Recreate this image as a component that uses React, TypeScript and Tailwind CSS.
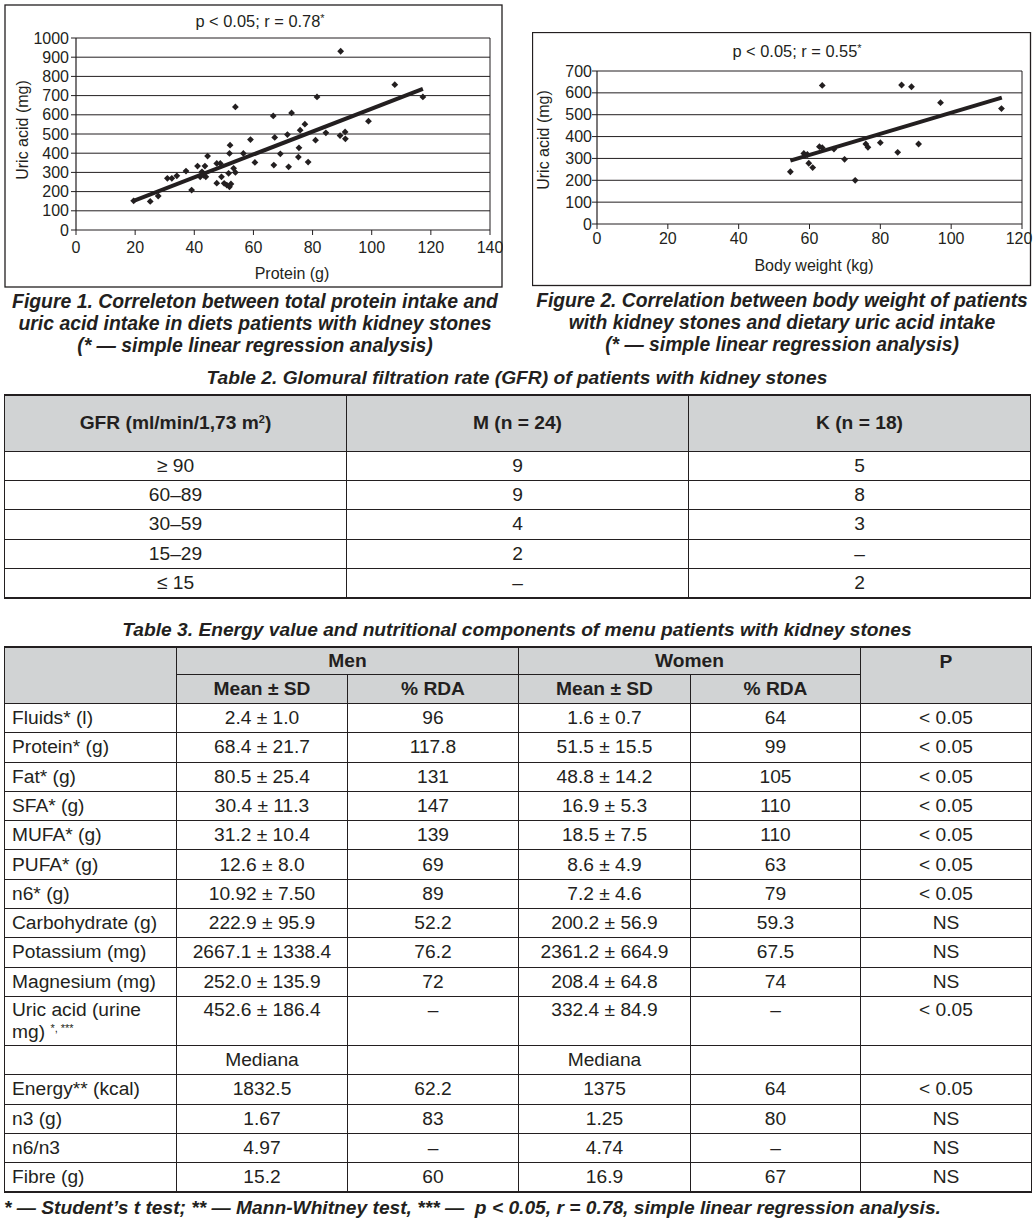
import React from "react";

type Pt = [number, number];

// Figure 1 data: protein (g) vs uric acid (mg)
const proteinPts: Pt[] = [
  [19.5, 152], [25.1, 149], [27.8, 177], [30.9, 269], [32.4, 269], [34.1, 282], [37.2, 307],
  [39.1, 208], [41.1, 333], [42, 277], [42.6, 303], [42.9, 295], [43.6, 333], [43.9, 277],
  [44.5, 385], [43.2, 285], [47.6, 347], [47.6, 244], [48.8, 347], [49.2, 277], [50.1, 243],
  [51, 234], [51.6, 295], [51.9, 225], [52.1, 442], [51.9, 399], [52.4, 240], [53.3, 321],
  [53.9, 641], [53.9, 300], [56.6, 399], [59, 471], [60.5, 352], [66.7, 594], [66.9, 338],
  [67.2, 482], [69.1, 397], [71.5, 497], [71.9, 329], [72.9, 610], [75.4, 428], [75.2, 380],
  [75.8, 520], [77.4, 551], [78.5, 354], [81, 468], [81.5, 693], [84.5, 506], [89.3, 492],
  [89.5, 931], [91, 511], [91.1, 475], [98.9, 567], [107.8, 757], [117.3, 693],
];

// Figure 2 data: body weight (kg) vs uric acid (mg)
const weightPts: Pt[] = [
  [54.6, 239], [58.4, 323], [59.4, 318], [59.8, 278], [60.9, 258], [62.8, 354], [63.6, 634],
  [63.6, 349], [66.9, 343], [69.9, 296], [72.9, 200], [75.9, 366], [76.5, 351], [80, 372],
  [84.9, 328], [86, 636], [88.8, 628], [90.8, 366], [97, 555], [114.2, 528],
];

const ink = "#231f20";

function Diamond({ x, y }: { x: number; y: number }) {
  return <polygon points={`${x},${y - 3.4} ${x + 3.4},${y} ${x},${y + 3.4} ${x - 3.4},${y}`} fill={ink} />;
}

function Figure1() {
  const sx = (v: number) => 76 + (v / 140) * 414;
  const sy = (v: number) => 230 - (v / 1000) * 192;
  const ys = [0, 100, 200, 300, 400, 500, 600, 700, 800, 900, 1000];
  const xs = [0, 20, 40, 60, 80, 100, 120, 140];
  return (
    <svg width={499} height={284} viewBox="4 4 499 284" className="block" fill={ink}>
      <rect x={5} y={5} width={497} height={282} fill="none" stroke={ink} strokeWidth={1.3} />
      <text x={260} y={27} textAnchor="middle" fontSize={16.4}>
        p &lt; 0.05; r = 0.78<tspan fontSize={11} dy={-5}>*</tspan>
      </text>
      {ys.map((v) => (
        <g key={v}>
          <line x1={71} x2={490} y1={sy(v)} y2={sy(v)} stroke={ink} strokeWidth={1} />
          <text x={69} y={sy(v) + 5.5} textAnchor="end" fontSize={16}>{v}</text>
        </g>
      ))}
      <line x1={76} x2={76} y1={38} y2={230} stroke={ink} strokeWidth={1.2} />
      <line x1={490} x2={490} y1={38} y2={230} stroke={ink} strokeWidth={1} />
      {xs.map((v) => (
        <g key={v}>
          <line x1={sx(v)} x2={sx(v)} y1={230} y2={235} stroke={ink} strokeWidth={1} />
          <text x={sx(v)} y={253} textAnchor="middle" fontSize={16}>{v}</text>
        </g>
      ))}
      <text x={292} y={279} textAnchor="middle" fontSize={16}>Protein (g)</text>
      <text x={28} y={130} textAnchor="middle" fontSize={16} transform="rotate(-90 28 130)">Uric acid (mg)</text>
      {proteinPts.map(([x, y], i) => (
        <Diamond key={i} x={sx(x)} y={sy(y)} />
      ))}
      <line x1={sx(19.5)} y1={sy(152)} x2={sx(117.3)} y2={sy(735)} stroke={ink} strokeWidth={4} />
    </svg>
  );
}

function Figure2() {
  const sx = (v: number) => 597 + (v / 120) * 425;
  const sy = (v: number) => 224 - (v / 700) * 153;
  const ys = [0, 100, 200, 300, 400, 500, 600, 700];
  const xs = [0, 20, 40, 60, 80, 100, 120];
  return (
    <svg width={502} height={255} viewBox="532 32 502 255" className="block" fill={ink}>
      <rect x={532.5} y={32.5} width={498} height={253} fill="none" stroke={ink} strokeWidth={1.3} />
      <text x={797} y={57} textAnchor="middle" fontSize={16.4}>
        p &lt; 0.05; r = 0.55<tspan fontSize={11} dy={-5}>*</tspan>
      </text>
      {ys.map((v) => (
        <g key={v}>
          <line x1={592} x2={1022} y1={sy(v)} y2={sy(v)} stroke={ink} strokeWidth={1} />
          <text x={592} y={sy(v) + 5.5} textAnchor="end" fontSize={16}>{v}</text>
        </g>
      ))}
      <line x1={597} x2={597} y1={71} y2={224} stroke={ink} strokeWidth={1.2} />
      <line x1={1022} x2={1022} y1={71} y2={224} stroke={ink} strokeWidth={1} />
      {xs.map((v) => (
        <g key={v}>
          <line x1={sx(v)} x2={sx(v)} y1={224} y2={229} stroke={ink} strokeWidth={1} />
          <text x={v === 120 ? 1019 : sx(v)} y={244} textAnchor="middle" fontSize={16}>{v}</text>
        </g>
      ))}
      <text x={814} y={271} textAnchor="middle" fontSize={16}>Body weight (kg)</text>
      <text x={549} y={140} textAnchor="middle" fontSize={16} transform="rotate(-90 549 140)">Uric acid (mg)</text>
      {weightPts.map(([x, y], i) => (
        <Diamond key={i} x={sx(x)} y={sy(y)} />
      ))}
      <line x1={sx(54.6)} y1={sy(290)} x2={sx(114.3)} y2={sy(578)} stroke={ink} strokeWidth={4} />
    </svg>
  );
}

const gfrRows = [
  ["≥ 90", "9", "5"],
  ["60–89", "9", "8"],
  ["30–59", "4", "3"],
  ["15–29", "2", "–"],
  ["≤ 15", "–", "2"],
];

type Row = { label: React.ReactNode; cells: string[]; tall?: boolean };

const nutrientRows: Row[] = [
  { label: "Fluids* (l)", cells: ["2.4 ± 1.0", "96", "1.6 ± 0.7", "64", "< 0.05"] },
  { label: "Protein* (g)", cells: ["68.4 ± 21.7", "117.8", "51.5 ± 15.5", "99", "< 0.05"] },
  { label: "Fat* (g)", cells: ["80.5 ± 25.4", "131", "48.8 ± 14.2", "105", "< 0.05"] },
  { label: "SFA* (g)", cells: ["30.4 ± 11.3", "147", "16.9 ± 5.3", "110", "< 0.05"] },
  { label: "MUFA* (g)", cells: ["31.2 ± 10.4", "139", "18.5 ± 7.5", "110", "< 0.05"] },
  { label: "PUFA* (g)", cells: ["12.6 ± 8.0", "69", "8.6 ± 4.9", "63", "< 0.05"] },
  { label: "n6* (g)", cells: ["10.92 ± 7.50", "89", "7.2 ± 4.6", "79", "< 0.05"] },
  { label: "Carbohydrate (g)", cells: ["222.9 ± 95.9", "52.2", "200.2 ± 56.9", "59.3", "NS"] },
  { label: "Potassium (mg)", cells: ["2667.1 ± 1338.4", "76.2", "2361.2 ± 664.9", "67.5", "NS"] },
  { label: "Magnesium (mg)", cells: ["252.0 ± 135.9", "72", "208.4 ± 64.8", "74", "NS"] },
  {
    label: (
      <>
        Uric acid (urine
        <br />
        mg) <sup className="text-[11px]">*, ***</sup>
      </>
    ),
    cells: ["452.6 ± 186.4", "–", "332.4 ± 84.9", "–", "< 0.05"],
    tall: true,
  },
  { label: "", cells: ["Mediana", "", "Mediana", "", ""] },
  { label: "Energy** (kcal)", cells: ["1832.5", "62.2", "1375", "64", "< 0.05"] },
  { label: "n3 (g)", cells: ["1.67", "83", "1.25", "80", "NS"] },
  { label: "n6/n3", cells: ["4.97", "–", "4.74", "–", "NS"] },
  { label: "Fibre (g)", cells: ["15.2", "60", "16.9", "67", "NS"] },
];

export default function App() {
  return (
    <div className="w-[1034px] bg-white font-['Liberation_Sans',Arial,sans-serif] text-[#231f20]">
      {/* Figures */}
      <div className="flex">
        <div className="w-[510px]">
          <div className="ml-[4px] mt-[4px]">
            <Figure1 />
          </div>
          <p className="mt-[2px] text-center text-[19.4px] font-bold italic leading-[22px]">
            Figure 1. Correleton between total protein intake and
            <br />
            uric acid intake in diets patients with kidney stones
            <br />
            (* — simple linear regression analysis)
          </p>
        </div>
        <div className="w-[524px]">
          <div className="ml-[22px] mt-[32px]">
            <Figure2 />
          </div>
          <p className="ml-[20px] mt-[3px] text-center text-[19.3px] font-bold italic leading-[22px]">
            Figure 2. Correlation between body weight of patients
            <br />
            with kidney stones and dietary uric acid intake
            <br />
            (* — simple linear regression analysis)
          </p>
        </div>
      </div>

      {/* Table 2 */}
      <p className="mt-[11px] text-center text-[19.2px] font-bold italic leading-[22px]">
        Table 2. Glomural filtration rate (GFR) of patients with kidney stones
      </p>
      <table className="ml-[4px] mt-[5px] w-[1027px] table-fixed border-collapse border-y-2 border-[#231f20] text-center text-[19.2px]">
        <thead>
          <tr className="h-[56px] bg-[#d1d3d4]">
            <th className="border border-[#231f20] font-bold">
              GFR (ml/min/1,73 m<sup className="text-[11px]">2</sup>)
            </th>
            <th className="border border-[#231f20] font-bold">M (n = 24)</th>
            <th className="border border-[#231f20] font-bold">K (n = 18)</th>
          </tr>
        </thead>
        <tbody>
          {gfrRows.map((r) => (
            <tr key={r[0]} className="h-[29.4px]">
              {r.map((c, i) => (
                <td key={i} className="border border-[#231f20] p-0 leading-tight">
                  {c}
                </td>
              ))}
            </tr>
          ))}
        </tbody>
      </table>

      {/* Table 3 */}
      <p className="mt-[20px] text-center text-[19.2px] font-bold italic leading-[22px]">
        Table 3. Energy value and nutritional components of menu patients with kidney stones
      </p>
      <table className="ml-[4px] mt-[5px] w-[1027px] table-fixed border-collapse border-y-2 border-[#231f20] text-center text-[19.2px]">
        <colgroup>
          <col className="w-[172px]" />
          <col className="w-[171px]" />
          <col className="w-[171px]" />
          <col className="w-[172px]" />
          <col className="w-[170px]" />
          <col className="w-[171px]" />
        </colgroup>
        <thead className="bg-[#d1d3d4]">
          <tr className="h-[27.5px]">
            <th rowSpan={2} className="border border-[#231f20]" />
            <th colSpan={2} className="border border-[#231f20] p-0 font-bold leading-tight">Men</th>
            <th colSpan={2} className="border border-[#231f20] p-0 font-bold leading-tight">Women</th>
            <th rowSpan={2} className="border border-[#231f20] pt-[2px] align-top font-bold leading-tight">P</th>
          </tr>
          <tr className="h-[29px]">
            <th className="border border-[#231f20] p-0 font-bold leading-tight">Mean ± SD</th>
            <th className="border border-[#231f20] p-0 font-bold leading-tight">% RDA</th>
            <th className="border border-[#231f20] p-0 font-bold leading-tight">Mean ± SD</th>
            <th className="border border-[#231f20] p-0 font-bold leading-tight">% RDA</th>
          </tr>
        </thead>
        <tbody>
          {nutrientRows.map((r, idx) => (
            <tr key={idx} className={r.tall ? "h-[48.5px]" : "h-[29.3px]"}>
              <td
                className={`border border-[#231f20] px-[7px] text-left ${
                  r.tall ? "py-[2px] align-top leading-[22px]" : "py-0 leading-tight"
                }`}
              >
                {r.label}
              </td>
              {r.cells.map((c, i) => (
                <td
                  key={i}
                  className={`border border-[#231f20] px-0 ${
                    r.tall ? "py-[2px] align-top leading-[22px]" : "py-0 leading-tight"
                  }`}
                >
                  {c}
                </td>
              ))}
            </tr>
          ))}
        </tbody>
      </table>
      <p className="ml-[4px] mt-[4px] pb-[8px] text-[19.2px] font-bold italic leading-[22px]">
        * — Student’s t test; ** — Mann-Whitney test, *** —&nbsp; p &lt; 0.05, r = 0.78, simple linear regression analysis.
      </p>
    </div>
  );
}
